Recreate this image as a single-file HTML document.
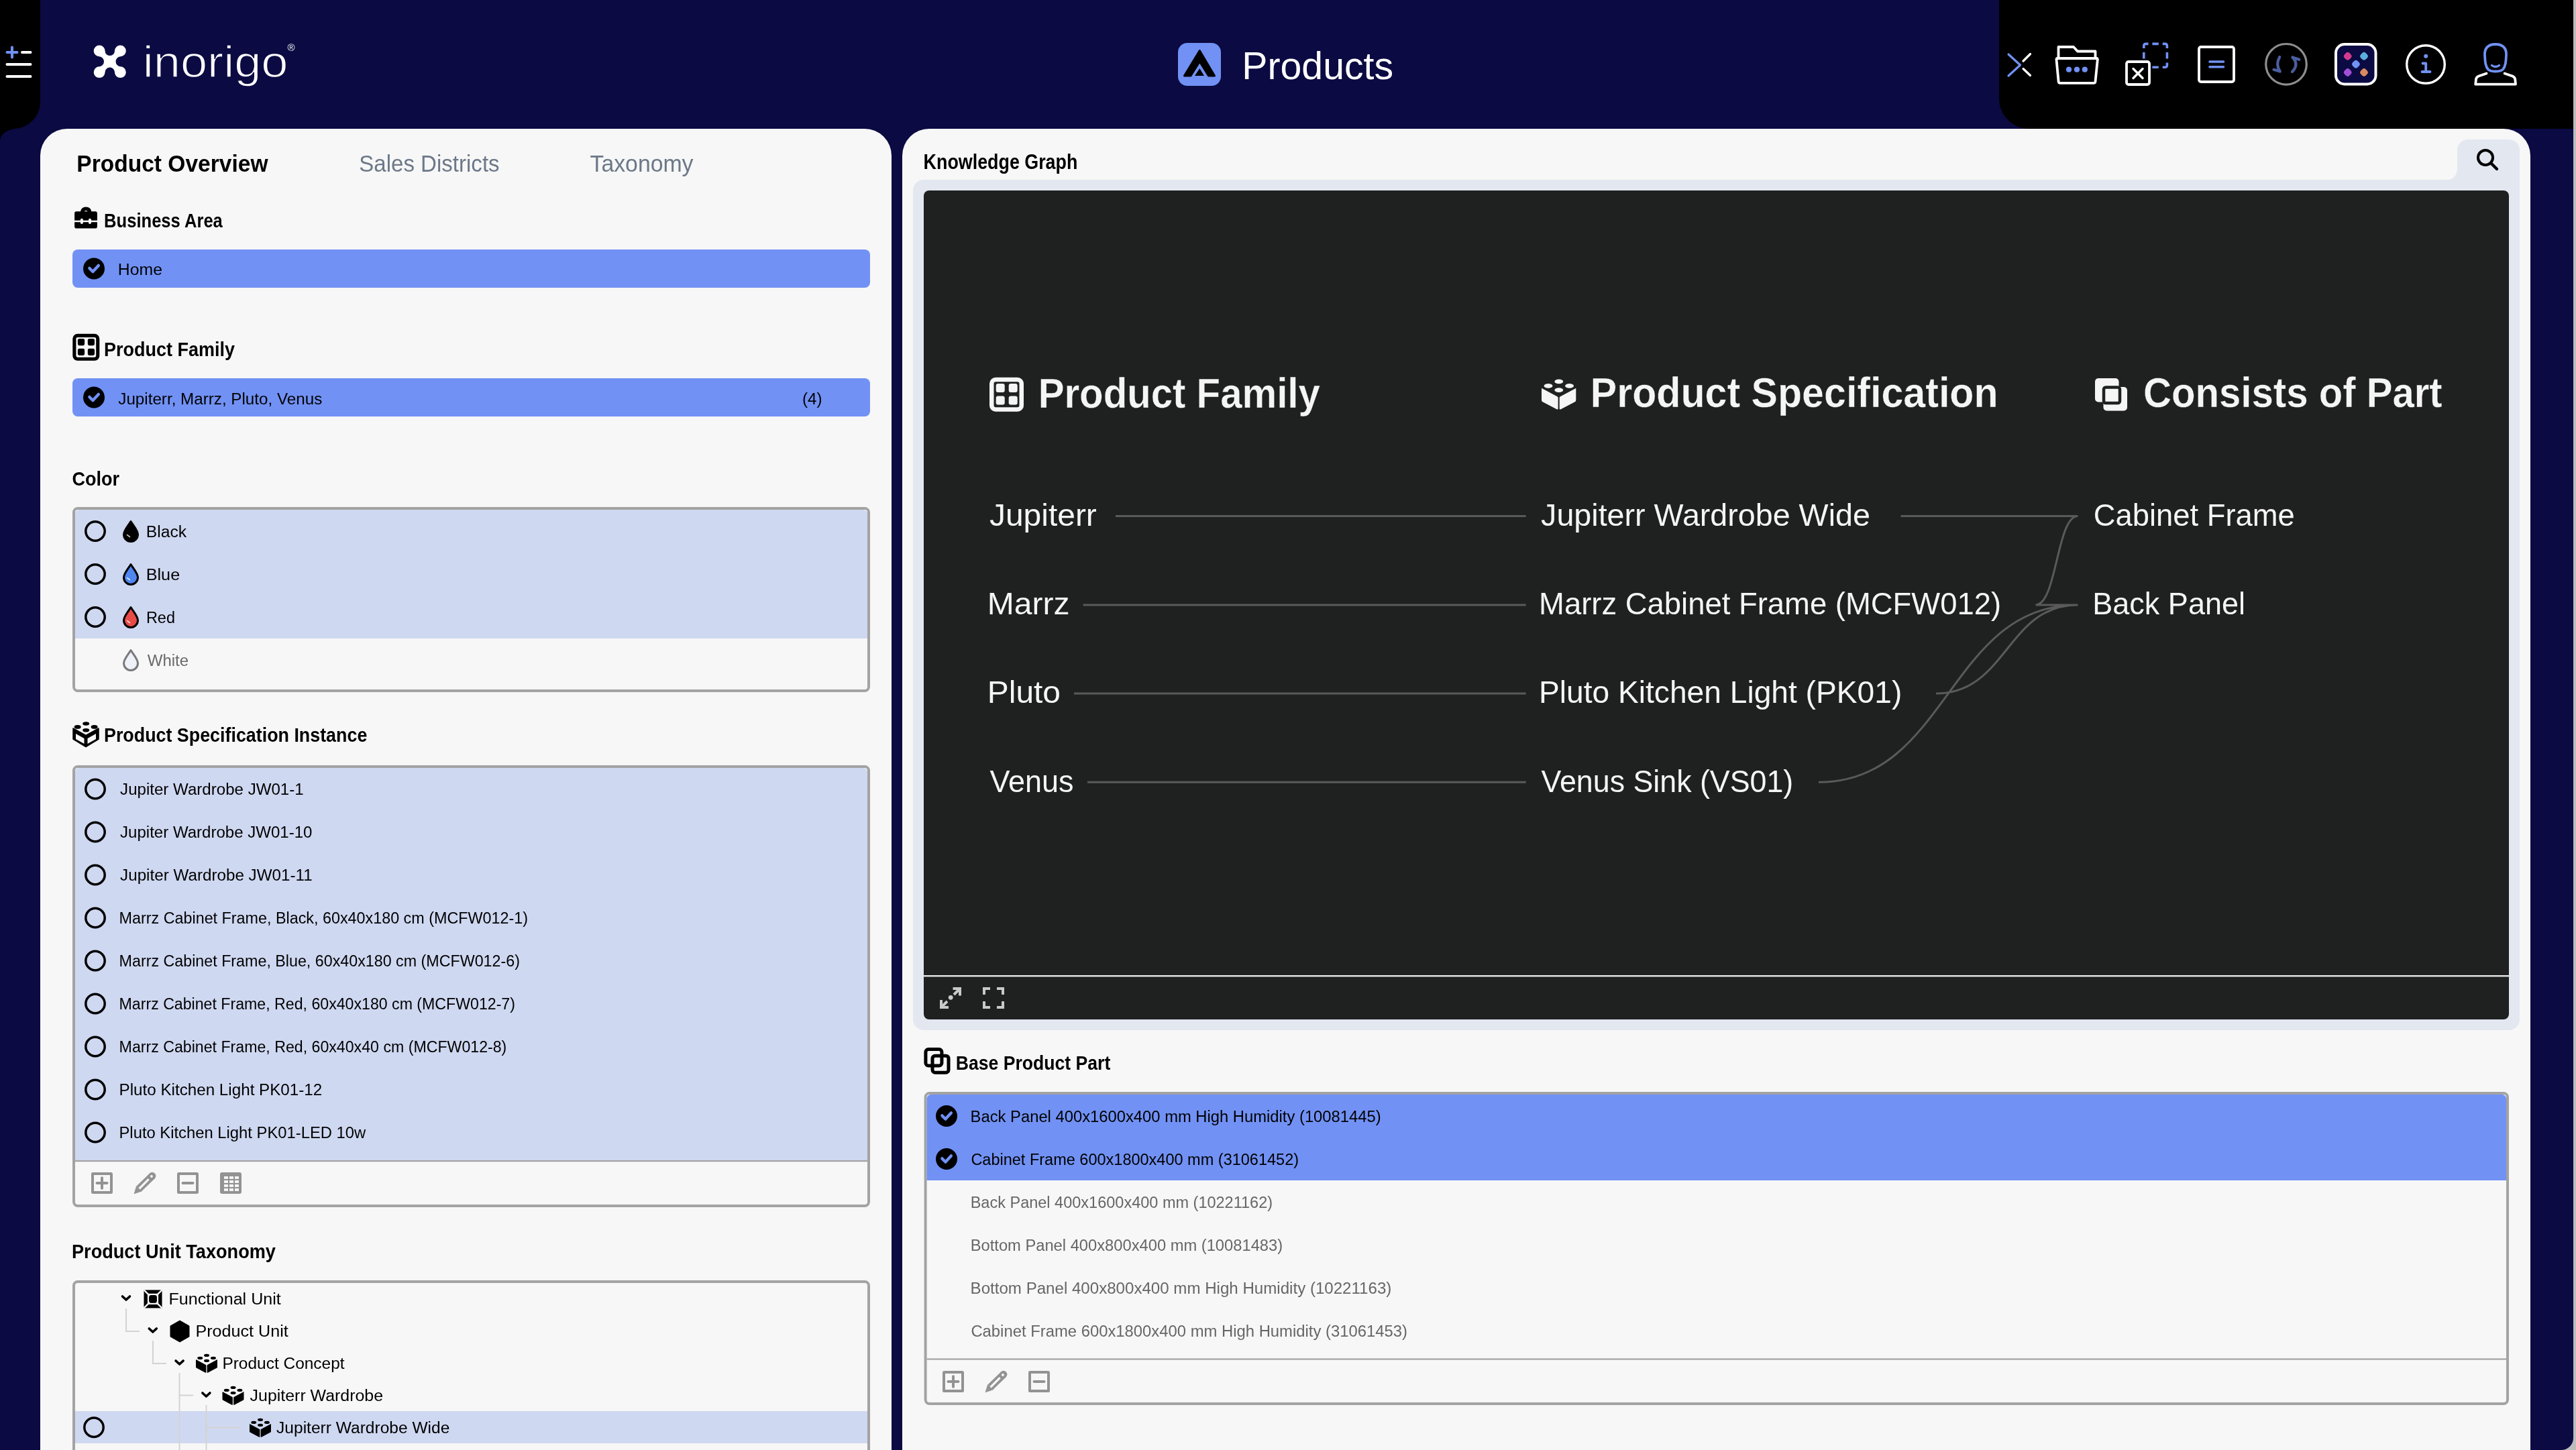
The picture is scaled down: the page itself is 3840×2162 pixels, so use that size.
<!DOCTYPE html>
<html><head><meta charset="utf-8"><title>Products</title>
<style>
html,body{margin:0;padding:0;width:3840px;height:2162px;overflow:hidden;background:#0b0a42;}
svg{display:block;font-family:"Liberation Sans",sans-serif;will-change:transform;}
</style></head><body>
<svg width="3840" height="2162" viewBox="0 0 3840 2162">
<rect x="0" y="0" width="3840" height="2162" fill="#0b0a42"/>
<rect x="3836" y="0" width="4" height="2162" fill="#bcbcbc"/>
<path d="M3836,2144 V2162 H3818 A18,18 0 0 0 3836,2144 Z" fill="#bcbcbc"/>
<path d="M0,0 H60 V152 A40,40 0 0 1 20,192 H0 Z" fill="#000"/>
<path d="M0,192 H26 A26,18 0 0 0 0,210 Z" fill="#000"/>
<path d="M2980,0 H3836 V192 H3025 A45,45 0 0 1 2980,147 Z" fill="#000"/>
<g stroke-linecap="round" stroke-width="4" fill="none"><path d="M10.5,78 H25.5 M18,70.5 V85.5" stroke="#7191f4"/><path d="M33,78 H45.5 M10.5,96 H45.5 M10.5,114 H45.5" stroke="#fff"/></g>
<mask id="logom"><rect x="140" y="60" width="50" height="60" fill="#fff"/><circle cx="163.75" cy="75.75" r="7.25" fill="#000"/><circle cx="163.75" cy="107.85" r="7.25" fill="#000"/><circle cx="147.5" cy="91.8" r="7.5" fill="#000"/><circle cx="180" cy="91.8" r="7.5" fill="#000"/></mask>
<g fill="#fff"><rect x="148.1" y="75.9" width="31.3" height="31.8" mask="url(#logom)"/><circle cx="148.1" cy="75.9" r="8.4"/><circle cx="179.4" cy="75.9" r="8.4"/><circle cx="148.1" cy="107.7" r="8.4"/><circle cx="179.4" cy="107.7" r="8.4"/></g>
<text x="212.7" y="114.6" font-size="66.0" fill="#fff" textLength="216.87" lengthAdjust="spacingAndGlyphs" stroke="#0b0a42" stroke-width="1.4">inorigo</text>
<text x="428.6" y="75.8" font-size="15.0" fill="#fff">®</text>
<rect x="1756" y="64" width="64" height="64" rx="14" fill="#7191f4"/>
<path d="M1788.3,75.5 L1765.5,113 H1775 L1788.3,91.6 L1801.5,113 H1810.5 Z" fill="#000" stroke="#000" stroke-width="3" stroke-linejoin="round"/>
<path d="M1781,113 L1788.3,102 L1795,113 Z" fill="#000"/>
<text x="1851.3" y="118.0" font-size="58.1" fill="#fff" textLength="225.76" lengthAdjust="spacingAndGlyphs">Products</text>
<g fill="none" stroke-linecap="round" stroke-linejoin="round">
<path d="M2994,81 L3011.5,97 L2994,113" stroke="#7191f4" stroke-width="3.2"/>
<path d="M3016,91 L3026.5,80.5 M3016,102.5 L3026.5,112.5" stroke="#fff" stroke-width="3.2"/>
<path d="M3068.5,86 V70 H3091 L3097,76.5 H3123.5 V86" stroke="#fff" stroke-width="3.8"/>
<path d="M3067,87 H3125.5 Q3127,87 3126.8,89 L3123.5,121.5 Q3123.2,123.8 3121,123.8 H3071 Q3068.8,123.8 3068.6,121.5 L3065.5,89 Q3065.3,87 3067,87 Z" stroke="#fff" stroke-width="3.8"/>
</g>
<g fill="#7191f4"><circle cx="3084" cy="103.7" r="4.1"/><circle cx="3096" cy="103.7" r="4.1"/><circle cx="3107.8" cy="103.7" r="4.1"/></g>
<g fill="none" stroke-linecap="round" stroke-linejoin="round">
<path d="M3195.8,72 V68.4 Q3195.8,65.4 3198.8,65.4 H3202.5 M3223.7,65.4 H3227.4 Q3230.4,65.4 3230.4,68.4 V72 M3230.4,93.6 V97.2 Q3230.4,100.2 3227.4,100.2 H3223.7 M3202.5,100.2 H3198.8 Q3195.8,100.2 3195.8,97.2 V93.6 M3208.4,65.4 H3217.8 M3208.4,100.2 H3217.8 M3195.8,78.1 V87.5 M3230.4,78.1 V87.5" stroke="#7191f4" stroke-width="3.6" stroke-linecap="butt"/>
<rect x="3170" y="92" width="34" height="34" rx="3" fill="#000" stroke="#fff" stroke-width="3.8"/>
<path d="M3180,102.5 L3194,116.5 M3194,102.5 L3180,116.5" stroke="#fff" stroke-width="3.4"/>
<rect x="3278" y="70" width="52" height="52" rx="3" stroke="#fff" stroke-width="3.8"/>
<path d="M3294,92 H3314.5 M3294,99.8 H3314.5" stroke="#7191f4" stroke-width="3.6"/>
<circle cx="3408" cy="95.8" r="30.3" stroke="#8e8e8e" stroke-width="3.2"/>
<path d="M3398.2,85 Q3391.8,96 3398.8,106.5 M3398.8,106.5 L3389.5,103.8" stroke="#4b5e9e" stroke-width="4.2"/>
<path d="M3417.5,85.5 Q3427.5,96 3417,107 M3417.5,85.5 L3427.3,88.8" stroke="#4b5e9e" stroke-width="4.2"/>
<rect x="3482" y="66" width="59.5" height="59.5" rx="13" fill="#0b0a42" stroke="#fff" stroke-width="4"/>
</g>
<rect x="3494.5" y="78.6" width="10.4" height="10.4" rx="4" fill="#d33a8f" transform="rotate(45 3499.7 83.8)"/>
<rect x="3518.8" y="78.6" width="10.4" height="10.4" rx="4" fill="#5bafde" transform="rotate(45 3524 83.8)"/>
<rect x="3506.7000000000003" y="90.5" width="10.4" height="10.4" rx="4" fill="#7191f4" transform="rotate(45 3511.9 95.7)"/>
<rect x="3494.5" y="102.8" width="10.4" height="10.4" rx="4" fill="#a24fd6" transform="rotate(45 3499.7 108)"/>
<rect x="3518.8" y="102.8" width="10.4" height="10.4" rx="4" fill="#d98a5f" transform="rotate(45 3524 108)"/>
<g fill="none" stroke-linecap="round" stroke-linejoin="round">
<circle cx="3616" cy="96" r="28.3" stroke="#fff" stroke-width="3.4"/>
<path d="M3611.5,94.5 H3616.2 V107 M3610.5,107 H3622.5" stroke="#7191f4" stroke-width="3.8"/>
</g>
<circle cx="3616.2" cy="83.8" r="3" fill="#7191f4"/>
<g fill="none" stroke-linecap="round" stroke-linejoin="round">
<path d="M3720,66 C3708,66 3703.5,73 3704,82 C3704.5,92 3705,99 3709,103.5 C3713,107.5 3727,107.5 3731,103.5 C3735,99 3735.5,92 3736,82 C3736.5,73 3732,66 3720,66 Z" stroke="#7191f4" stroke-width="3.8"/>
<path d="M3714.5,97.5 Q3720,101.5 3725.5,97.5" stroke="#7191f4" stroke-width="3.4"/>
<path d="M3706.5,109.5 L3695,113.5 Q3691.5,115 3691,118 L3690.2,125.6 H3750 L3749.2,118 Q3748.7,115 3745.2,113.5 L3733.6,109.5" stroke="#fff" stroke-width="3.8"/>
</g>
<path d="M60,2162 V232 A40,40 0 0 1 100,192 H1289 A40,40 0 0 1 1329,232 V2162 Z" fill="#f7f7f7"/>
<path d="M1345,2162 V232 A40,40 0 0 1 1385,192 H3732 A40,40 0 0 1 3772,232 V2162 Z" fill="#f7f7f7"/>
<text x="114.3" y="256.0" font-size="34.9" font-weight="bold" fill="#000" textLength="285.18" lengthAdjust="spacingAndGlyphs">Product Overview</text>
<text x="535.3" y="256.0" font-size="35.6" fill="#6c7888" textLength="209.29" lengthAdjust="spacingAndGlyphs">Sales Districts</text>
<text x="879.5" y="256.0" font-size="35.6" fill="#6c7888" textLength="154.01" lengthAdjust="spacingAndGlyphs">Taxonomy</text>
<path d="M122.6,317 C122.2,309.3 134.1,309.3 133.7,317" fill="none" stroke="#000" stroke-width="5.6"/>
<rect x="111.1" y="315.3" width="33.8" height="25.2" rx="2.8" fill="#000"/>
<rect x="111" y="328.7" width="34.2" height="2.5" fill="#f7f7f7"/>
<rect x="119.9" y="325.7" width="4" height="8.2" rx="2" fill="#f7f7f7"/>
<rect x="132" y="325.7" width="4" height="8.2" rx="2" fill="#f7f7f7"/>
<text x="155.1" y="338.9" font-size="29.1" font-weight="bold" fill="#000" textLength="176.74" lengthAdjust="spacingAndGlyphs">Business Area</text>
<rect x="108" y="372" width="1189" height="57" rx="8" fill="#7191f4"/>
<circle cx="140" cy="400.5" r="16" fill="#000"/>
<path d="M133.4,399.9 L138.4,405.1 L146.8,395.9" fill="none" stroke="#7191f4" stroke-width="4.4" stroke-linecap="round" stroke-linejoin="round"/>
<text x="175.8" y="410.2" font-size="24.7" fill="#000" textLength="66.14" lengthAdjust="spacingAndGlyphs">Home</text>
<rect x="110.85" y="500.35" width="34.90" height="34.90" rx="4.71" fill="none" stroke="#000" stroke-width="5.10"/>
<rect x="115.91" y="505.02" width="10.20" height="10.20" rx="2.35" fill="#000"/>
<rect x="115.91" y="519.68" width="10.20" height="10.20" rx="2.35" fill="#000"/>
<rect x="130.81" y="505.02" width="10.20" height="10.20" rx="2.35" fill="#000"/>
<rect x="130.81" y="519.68" width="10.20" height="10.20" rx="2.35" fill="#000"/>
<text x="155.0" y="530.8" font-size="29.1" font-weight="bold" fill="#000" textLength="194.95" lengthAdjust="spacingAndGlyphs">Product Family</text>
<rect x="108" y="564" width="1189" height="57" rx="8" fill="#7191f4"/>
<circle cx="140" cy="592.5" r="16" fill="#000"/>
<path d="M133.4,591.9 L138.4,597.1 L146.8,587.9" fill="none" stroke="#7191f4" stroke-width="4.4" stroke-linecap="round" stroke-linejoin="round"/>
<text x="176.3" y="602.6" font-size="24.7" fill="#000" textLength="303.94" lengthAdjust="spacingAndGlyphs">Jupiterr, Marrz, Pluto, Venus</text>
<text x="1196.0" y="602.6" font-size="24.7" fill="#000" textLength="29.49" lengthAdjust="spacingAndGlyphs">(4)</text>
<text x="107.4" y="723.5" font-size="29.1" font-weight="bold" fill="#000" textLength="70.52" lengthAdjust="spacingAndGlyphs">Color</text>
<rect x="110" y="758" width="1185" height="272" rx="6" fill="#f7f7f7" stroke="#a3a3a3" stroke-width="4"/>
<path d="M112,766 A6,6 0 0 1 118,760 H1287 A6,6 0 0 1 1293,766 V952 H112 Z" fill="#cfd8f1"/>
<circle cx="142" cy="792" r="14.2" fill="none" stroke="#000" stroke-width="3.5"/>
<path d="M195,777.5 C199,784 205.5,791 205.5,797 A10.5,10.5 0 0 1 184.5,797 C184.5,791 191,784 195,777.5 Z" fill="#000" stroke="#000" stroke-width="3" stroke-linejoin="round"/>
<path d="M189.5,797.5 L193.5,800.5" stroke="#fff" stroke-opacity="0.75" stroke-width="1.6" stroke-linecap="round"/>
<text x="217.8" y="801.0" font-size="24.7" fill="#000" textLength="60.39" lengthAdjust="spacingAndGlyphs">Black</text>
<circle cx="142" cy="856" r="14.2" fill="none" stroke="#000" stroke-width="3.5"/>
<path d="M195,841.5 C199,848 205.5,855 205.5,861 A10.5,10.5 0 0 1 184.5,861 C184.5,855 191,848 195,841.5 Z" fill="#4f86f0" stroke="#000" stroke-width="3" stroke-linejoin="round"/>
<path d="M189.5,861.5 L193.5,864.5" stroke="#fff" stroke-opacity="0.75" stroke-width="1.6" stroke-linecap="round"/>
<text x="217.7" y="865.0" font-size="24.7" fill="#000" textLength="50.49" lengthAdjust="spacingAndGlyphs">Blue</text>
<circle cx="142" cy="920" r="14.2" fill="none" stroke="#000" stroke-width="3.5"/>
<path d="M195,905.5 C199,912 205.5,919 205.5,925 A10.5,10.5 0 0 1 184.5,925 C184.5,919 191,912 195,905.5 Z" fill="#e84b47" stroke="#000" stroke-width="3" stroke-linejoin="round"/>
<path d="M189.5,925.5 L193.5,928.5" stroke="#fff" stroke-opacity="0.75" stroke-width="1.6" stroke-linecap="round"/>
<text x="217.9" y="929.0" font-size="24.7" fill="#000" textLength="43.04" lengthAdjust="spacingAndGlyphs">Red</text>
<path d="M195,969.5 C199,976 205.5,983 205.5,989 A10.5,10.5 0 0 1 184.5,989 C184.5,983 191,976 195,969.5 Z" fill="#eef1f8" stroke="#7a7a7a" stroke-width="3" stroke-linejoin="round"/>
<text x="219.7" y="993.0" font-size="24.7" fill="#6a6a6a" textLength="61.47" lengthAdjust="spacingAndGlyphs">White</text>
<path d="M109.00,1086.00 L128.00,1096.50 L147.00,1086.00 L147.00,1102.00 L128.00,1113.50 L109.00,1102.00 Z" fill="#000" stroke="#000" stroke-width="1.50" stroke-linejoin="round"/>
<path d="M113.00,1094.00 L125.50,1101.00 L125.50,1109.00 L113.00,1102.00 Z M130.50,1101.00 L143.00,1094.00 L143.00,1102.00 L130.50,1109.00 Z" fill="#f7f7f7"/>
<ellipse cx="115.70" cy="1083.90" rx="5.00" ry="2.80" fill="#000"/>
<ellipse cx="140.60" cy="1083.90" rx="5.00" ry="2.80" fill="#000"/>
<ellipse cx="128.20" cy="1079.00" rx="5.00" ry="2.80" fill="#000"/>
<ellipse cx="128.20" cy="1088.80" rx="5.00" ry="2.80" fill="#000"/>
<text x="155.0" y="1105.7" font-size="29.1" font-weight="bold" fill="#000" textLength="392.31" lengthAdjust="spacingAndGlyphs">Product Specification Instance</text>
<rect x="110" y="1143" width="1185" height="655" rx="6" fill="#f7f7f7" stroke="#a3a3a3" stroke-width="4"/>
<path d="M112,1151 A6,6 0 0 1 118,1145 H1287 A6,6 0 0 1 1293,1151 V1730 H112 Z" fill="#cfd8f1"/>
<rect x="112" y="1730" width="1181" height="2.2" fill="#a3a3a3"/>
<circle cx="142" cy="1176.5" r="14.2" fill="none" stroke="#000" stroke-width="3.5"/>
<text x="179.1" y="1184.7" font-size="24.7" fill="#000" textLength="273.55" lengthAdjust="spacingAndGlyphs">Jupiter Wardrobe JW01-1</text>
<circle cx="142" cy="1240.5" r="14.2" fill="none" stroke="#000" stroke-width="3.5"/>
<text x="179.1" y="1248.7" font-size="24.7" fill="#000" textLength="286.31" lengthAdjust="spacingAndGlyphs">Jupiter Wardrobe JW01-10</text>
<circle cx="142" cy="1304.5" r="14.2" fill="none" stroke="#000" stroke-width="3.5"/>
<text x="179.1" y="1312.7" font-size="24.7" fill="#000" textLength="286.55" lengthAdjust="spacingAndGlyphs">Jupiter Wardrobe JW01-11</text>
<circle cx="142" cy="1368.5" r="14.2" fill="none" stroke="#000" stroke-width="3.5"/>
<text x="177.6" y="1376.7" font-size="24.7" fill="#000" textLength="609.36" lengthAdjust="spacingAndGlyphs">Marrz Cabinet Frame, Black, 60x40x180 cm (MCFW012-1)</text>
<circle cx="142" cy="1432.5" r="14.2" fill="none" stroke="#000" stroke-width="3.5"/>
<text x="177.6" y="1440.7" font-size="24.7" fill="#000" textLength="597.35" lengthAdjust="spacingAndGlyphs">Marrz Cabinet Frame, Blue, 60x40x180 cm (MCFW012-6)</text>
<circle cx="142" cy="1496.5" r="14.2" fill="none" stroke="#000" stroke-width="3.5"/>
<text x="177.6" y="1504.7" font-size="24.7" fill="#000" textLength="590.33" lengthAdjust="spacingAndGlyphs">Marrz Cabinet Frame, Red, 60x40x180 cm (MCFW012-7)</text>
<circle cx="142" cy="1560.5" r="14.2" fill="none" stroke="#000" stroke-width="3.5"/>
<text x="177.6" y="1568.7" font-size="24.7" fill="#000" textLength="577.74" lengthAdjust="spacingAndGlyphs">Marrz Cabinet Frame, Red, 60x40x40 cm (MCFW012-8)</text>
<circle cx="142" cy="1624.5" r="14.2" fill="none" stroke="#000" stroke-width="3.5"/>
<text x="177.5" y="1632.7" font-size="24.7" fill="#000" textLength="302.80" lengthAdjust="spacingAndGlyphs">Pluto Kitchen Light PK01-12</text>
<circle cx="142" cy="1688.5" r="14.2" fill="none" stroke="#000" stroke-width="3.5"/>
<text x="177.5" y="1696.7" font-size="24.7" fill="#000" textLength="367.69" lengthAdjust="spacingAndGlyphs">Pluto Kitchen Light PK01-LED 10w</text>
<rect x="138" y="1750" width="28" height="28" rx="0.6" fill="none" stroke="#939393" stroke-width="4"/>
<path d="M144.5,1764 H159.5 M152,1756.3 V1771.7" stroke="#939393" stroke-width="4" stroke-linecap="round"/>
<path d="M207.55,1772.15 L226.9,1753.3" stroke="#939393" stroke-width="10.9"/>
<circle cx="226.9" cy="1753.3" r="5.45" fill="#939393"/>
<path d="M200.1,1779.8 L203.6,1768.4 L211.5,1775.9 Z" fill="#939393" stroke="#939393" stroke-width="0.8" stroke-linejoin="round"/>
<path d="M207.6,1772.4 L221.7,1758.2" stroke="#f7f7f7" stroke-width="3.2"/>
<circle cx="225.9" cy="1754.1" r="2" fill="#f7f7f7"/>
<rect x="266" y="1750" width="28" height="28" rx="0.6" fill="none" stroke="#939393" stroke-width="4"/>
<path d="M272.5,1764 H287.5" stroke="#939393" stroke-width="4" stroke-linecap="round"/>
<rect x="328" y="1748" width="32" height="32" rx="3" fill="#939393"/>
<rect x="334.0" y="1754.0" width="6" height="3.9" fill="#f7f7f7"/>
<rect x="342.0" y="1754.0" width="6" height="3.9" fill="#f7f7f7"/>
<rect x="350.0" y="1754.0" width="6" height="3.9" fill="#f7f7f7"/>
<rect x="334.0" y="1760.0" width="6" height="3.9" fill="#f7f7f7"/>
<rect x="342.0" y="1760.0" width="6" height="3.9" fill="#f7f7f7"/>
<rect x="350.0" y="1760.0" width="6" height="3.9" fill="#f7f7f7"/>
<rect x="334.0" y="1766.0" width="6" height="3.9" fill="#f7f7f7"/>
<rect x="342.0" y="1766.0" width="6" height="3.9" fill="#f7f7f7"/>
<rect x="350.0" y="1766.0" width="6" height="3.9" fill="#f7f7f7"/>
<rect x="334.0" y="1772.0" width="6" height="3.9" fill="#f7f7f7"/>
<rect x="342.0" y="1772.0" width="6" height="3.9" fill="#f7f7f7"/>
<rect x="350.0" y="1772.0" width="6" height="3.9" fill="#f7f7f7"/>
<text x="107.0" y="1875.5" font-size="29.1" font-weight="bold" fill="#000" textLength="303.95" lengthAdjust="spacingAndGlyphs">Product Unit Taxonomy</text>
<rect x="110" y="1911" width="1185" height="400" rx="6" fill="#f7f7f7" stroke="#a3a3a3" stroke-width="4"/>
<rect x="112" y="2104" width="1181" height="48" fill="#cfd8f1"/>
<path d="M188,1951 V1985 H208 M228,1999 V2033 H248 M267.5,2047 V2162 M267.5,2080.5 H288 M307.5,2095 V2162 M307.5,2128.5 H360" fill="none" stroke="#d3d3d3" stroke-width="2"/>
<path d="M182.5,1933.0 L188.0,1938.0 L193.5,1933.0" fill="none" stroke="#000" stroke-width="3.6" stroke-linecap="round" stroke-linejoin="round"/>
<path d="M222.3,1981.0 L227.8,1986.0 L233.3,1981.0" fill="none" stroke="#000" stroke-width="3.6" stroke-linecap="round" stroke-linejoin="round"/>
<path d="M262.1,2029.0 L267.6,2034.0 L273.1,2029.0" fill="none" stroke="#000" stroke-width="3.6" stroke-linecap="round" stroke-linejoin="round"/>
<path d="M301.9,2077.0 L307.4,2082.0 L312.9,2077.0" fill="none" stroke="#000" stroke-width="3.6" stroke-linecap="round" stroke-linejoin="round"/>
<rect x="214.5" y="1923.4" width="27" height="27" fill="#000"/>
<path d="M217.5,1926.4 L222.5,1931.4 M238.5,1926.4 L233.5,1931.4 M217.5,1947.4 L222.5,1942.4 M238.5,1947.4 L233.5,1942.4" stroke="#f7f7f7" stroke-width="2"/>
<rect x="221.0" y="1929.9" width="14" height="14" fill="none" stroke="#f7f7f7" stroke-width="2.2"/>
<path d="M214.5,1923.4 L241.5,1950.4 M241.5,1923.4 L214.5,1950.4" stroke="#f7f7f7" stroke-width="2.2"/>
<rect x="222.7" y="1931.6000000000001" width="10.6" height="10.6" fill="#000"/>
<path d="M268,1969 L282,1977 L282,1993 L268,2001 L254,1993 L254,1977 Z" fill="#000" stroke="#000" stroke-width="1" stroke-linejoin="round"/>
<path d="M292.00,2027.12 L306.88,2035.04 Q307.36,2035.36 307.36,2036.00 L307.36,2046.00 Q307.36,2047.28 306.16,2046.64 L293.04,2039.84 Q292.00,2039.28 292.00,2038.24 Z" fill="#000"/>
<path d="M324.00,2027.12 L309.12,2035.04 Q308.64,2035.36 308.64,2036.00 L308.64,2046.00 Q308.64,2047.28 309.84,2046.64 L322.96,2039.84 Q324.00,2039.28 324.00,2038.24 Z" fill="#000"/>
<ellipse cx="298.24" cy="2024.96" rx="4.00" ry="2.12" fill="#000"/>
<ellipse cx="317.92" cy="2024.96" rx="4.00" ry="2.12" fill="#000"/>
<ellipse cx="308.08" cy="2020.96" rx="4.00" ry="2.12" fill="#000"/>
<ellipse cx="308.08" cy="2028.88" rx="4.00" ry="2.12" fill="#000"/>
<path d="M331.50,2075.12 L346.38,2083.04 Q346.86,2083.36 346.86,2084.00 L346.86,2094.00 Q346.86,2095.28 345.66,2094.64 L332.54,2087.84 Q331.50,2087.28 331.50,2086.24 Z" fill="#000"/>
<path d="M363.50,2075.12 L348.62,2083.04 Q348.14,2083.36 348.14,2084.00 L348.14,2094.00 Q348.14,2095.28 349.34,2094.64 L362.46,2087.84 Q363.50,2087.28 363.50,2086.24 Z" fill="#000"/>
<ellipse cx="337.74" cy="2072.96" rx="4.00" ry="2.12" fill="#000"/>
<ellipse cx="357.42" cy="2072.96" rx="4.00" ry="2.12" fill="#000"/>
<ellipse cx="347.58" cy="2068.96" rx="4.00" ry="2.12" fill="#000"/>
<ellipse cx="347.58" cy="2076.88" rx="4.00" ry="2.12" fill="#000"/>
<path d="M372.00,2123.12 L386.88,2131.04 Q387.36,2131.36 387.36,2132.00 L387.36,2142.00 Q387.36,2143.28 386.16,2142.64 L373.04,2135.84 Q372.00,2135.28 372.00,2134.24 Z" fill="#000"/>
<path d="M404.00,2123.12 L389.12,2131.04 Q388.64,2131.36 388.64,2132.00 L388.64,2142.00 Q388.64,2143.28 389.84,2142.64 L402.96,2135.84 Q404.00,2135.28 404.00,2134.24 Z" fill="#000"/>
<ellipse cx="378.24" cy="2120.96" rx="4.00" ry="2.12" fill="#000"/>
<ellipse cx="397.92" cy="2120.96" rx="4.00" ry="2.12" fill="#000"/>
<ellipse cx="388.08" cy="2116.96" rx="4.00" ry="2.12" fill="#000"/>
<ellipse cx="388.08" cy="2124.88" rx="4.00" ry="2.12" fill="#000"/>
<text x="251.5" y="1945.1" font-size="24.7" fill="#000" textLength="167.24" lengthAdjust="spacingAndGlyphs">Functional Unit</text>
<text x="291.5" y="1993.1" font-size="24.7" fill="#000" textLength="138.24" lengthAdjust="spacingAndGlyphs">Product Unit</text>
<text x="331.4" y="2041.1" font-size="24.7" fill="#000" textLength="182.19" lengthAdjust="spacingAndGlyphs">Product Concept</text>
<text x="372.6" y="2089.1" font-size="24.7" fill="#000" textLength="198.49" lengthAdjust="spacingAndGlyphs">Jupiterr Wardrobe</text>
<text x="412.1" y="2137.1" font-size="24.7" fill="#000" textLength="258.27" lengthAdjust="spacingAndGlyphs">Jupiterr Wardrobe Wide</text>
<circle cx="140" cy="2128.3" r="14.2" fill="none" stroke="#000" stroke-width="3.5"/>
<text x="1376.6" y="251.7" font-size="30.5" font-weight="bold" fill="#000" textLength="229.76" lengthAdjust="spacingAndGlyphs">Knowledge Graph</text>
<rect x="1361" y="268" width="2395" height="1268" rx="16" fill="#e3e7f0"/>
<rect x="3663" y="208" width="93" height="100" rx="16" fill="#e3e7f0"/>
<path d="M3663,252 V268.5 H3647 A16,16 0 0 0 3663,252 Z" fill="#e3e7f0"/>
<circle cx="3705" cy="235" r="11" fill="none" stroke="#000" stroke-width="4"/>
<path d="M3713.5,243.5 L3722,252" stroke="#000" stroke-width="4.4" stroke-linecap="round"/>
<rect x="1377" y="284" width="2363" height="1236" rx="8" fill="#1f2020"/>
<rect x="1377" y="1454" width="2363" height="2.4" fill="#e6e6e6"/>
<g fill="none" stroke="#c9c9c9" stroke-width="4">
<path d="M1420.5,1474 H1431 V1484.5 M1414,1502 H1403 V1491"/>
<path d="M1431,1474 L1422,1483 M1403,1502 L1412,1493"/>
<path d="M1467,1483 V1474 H1476 M1486,1474 H1495 V1483 M1467,1493 V1502 H1476 M1486,1502 H1495 V1493"/>
</g>
<circle cx="1417.2" cy="1487.3" r="3.4" fill="#c9c9c9"/>
<rect x="1478.25" y="565.95" width="44.50" height="44.50" rx="6.00" fill="none" stroke="#f5f5f5" stroke-width="6.50"/>
<rect x="1484.70" y="571.90" width="13.00" height="13.00" rx="3.00" fill="#f5f5f5"/>
<rect x="1484.70" y="590.60" width="13.00" height="13.00" rx="3.00" fill="#f5f5f5"/>
<rect x="1503.70" y="571.90" width="13.00" height="13.00" rx="3.00" fill="#f5f5f5"/>
<rect x="1503.70" y="590.60" width="13.00" height="13.00" rx="3.00" fill="#f5f5f5"/>
<text x="1547.7" y="607.5" font-size="63.4" font-weight="bold" fill="#f5f5f5" textLength="420.20" lengthAdjust="spacingAndGlyphs" stroke="#1f2020" stroke-width="0.4">Product Family</text>
<path d="M2298.00,578.84 L2321.85,591.53 Q2322.62,592.05 2322.62,593.07 L2322.62,609.11 Q2322.62,611.16 2320.70,610.13 L2299.67,599.23 Q2298.00,598.33 2298.00,596.66 Z" fill="#f5f5f5"/>
<path d="M2349.30,578.84 L2325.45,591.53 Q2324.68,592.05 2324.68,593.07 L2324.68,609.11 Q2324.68,611.16 2326.60,610.13 L2347.63,599.23 Q2349.30,598.33 2349.30,596.66 Z" fill="#f5f5f5"/>
<ellipse cx="2308.00" cy="575.38" rx="6.41" ry="3.40" fill="#f5f5f5"/>
<ellipse cx="2339.55" cy="575.38" rx="6.41" ry="3.40" fill="#f5f5f5"/>
<ellipse cx="2323.78" cy="568.96" rx="6.41" ry="3.40" fill="#f5f5f5"/>
<ellipse cx="2323.78" cy="581.66" rx="6.41" ry="3.40" fill="#f5f5f5"/>
<text x="2370.7" y="607.3" font-size="63.4" font-weight="bold" fill="#f5f5f5" textLength="607.92" lengthAdjust="spacingAndGlyphs" stroke="#1f2020" stroke-width="0.4">Product Specification</text>
<rect x="3123" y="564" width="35.5" height="35.5" rx="5" fill="#f5f5f5"/>
<rect x="3135.5" y="577" width="35.5" height="35.5" rx="5" fill="#f5f5f5" stroke="#1f2020" stroke-width="0"/>
<rect x="3136" y="577.5" width="24" height="23.5" rx="3" fill="none" stroke="#1f2020" stroke-width="4.5"/>
<text x="3195.1" y="607.3" font-size="63.4" font-weight="bold" fill="#f5f5f5" textLength="445.59" lengthAdjust="spacingAndGlyphs" stroke="#1f2020" stroke-width="0.4">Consists of Part</text>
<text x="1475.0" y="783.8" font-size="46.5" fill="#f5f5f5" textLength="159.84" lengthAdjust="spacingAndGlyphs">Jupiterr</text>
<text x="1471.8" y="916.1" font-size="46.5" fill="#f5f5f5" textLength="122.63" lengthAdjust="spacingAndGlyphs">Marrz</text>
<text x="1471.8" y="1048.2" font-size="46.5" fill="#f5f5f5" textLength="109.24" lengthAdjust="spacingAndGlyphs">Pluto</text>
<text x="1475.5" y="1180.5" font-size="46.5" fill="#f5f5f5" textLength="125.09" lengthAdjust="spacingAndGlyphs">Venus</text>
<text x="2297.1" y="783.8" font-size="46.5" fill="#f5f5f5" textLength="490.79" lengthAdjust="spacingAndGlyphs">Jupiterr Wardrobe Wide</text>
<text x="2294.1" y="916.1" font-size="46.5" fill="#f5f5f5" textLength="689.04" lengthAdjust="spacingAndGlyphs">Marrz Cabinet Frame (MCFW012)</text>
<text x="2294.0" y="1048.2" font-size="46.5" fill="#f5f5f5" textLength="541.25" lengthAdjust="spacingAndGlyphs">Pluto Kitchen Light (PK01)</text>
<text x="2297.6" y="1180.5" font-size="46.5" fill="#f5f5f5" textLength="375.65" lengthAdjust="spacingAndGlyphs">Venus Sink (VS01)</text>
<text x="3120.7" y="783.8" font-size="46.5" fill="#f5f5f5" textLength="300.12" lengthAdjust="spacingAndGlyphs">Cabinet Frame</text>
<text x="3119.3" y="916.1" font-size="46.5" fill="#f5f5f5" textLength="227.70" lengthAdjust="spacingAndGlyphs">Back Panel</text>
<path d="M1663,769.6 H2274.6 M1614.6,901.9 H2274.6 M1601,1034 H2274.6 M1621,1166.3 H2274.6 M2833.6,769.6 H3097.4 M3034.5,901.9 C3065.95,901.9 3065.95,769.6 3097.4,769.6 M3034.5,901.9 H3097.4 M2886,1034 C2991.7,1034 2991.7,901.9 3097.4,901.9 M2711,1166.3 C2904.2,1166.3 2904.2,901.9 3097.4,901.9" fill="none" stroke="#5a5a5a" stroke-width="3"/>
<rect x="1379.9" y="1564.5" width="24" height="24.5" rx="4" fill="none" stroke="#000" stroke-width="5"/>
<rect x="1390" y="1574.2" width="24" height="25" rx="4" fill="none" stroke="#000" stroke-width="5"/>
<text x="1424.7" y="1594.6" font-size="29.1" font-weight="bold" fill="#000" textLength="230.60" lengthAdjust="spacingAndGlyphs">Base Product Part</text>
<rect x="1379.6" y="1630" width="2358.4" height="463" rx="6" fill="#f7f7f7" stroke="#a3a3a3" stroke-width="4"/>
<path d="M1381.6,1638 A6,6 0 0 1 1387.6,1632 H3730 A6,6 0 0 1 3736,1638 V1760 H1381.6 Z" fill="#7191f4"/>
<circle cx="1411" cy="1664" r="16" fill="#000"/>
<path d="M1404.4,1663.4 L1409.4,1668.6 L1417.8,1659.4" fill="none" stroke="#7191f4" stroke-width="4.4" stroke-linecap="round" stroke-linejoin="round"/>
<circle cx="1411" cy="1728" r="16" fill="#000"/>
<path d="M1404.4,1727.4 L1409.4,1732.6 L1417.8,1723.4" fill="none" stroke="#7191f4" stroke-width="4.4" stroke-linecap="round" stroke-linejoin="round"/>
<text x="1446.6" y="1673.3" font-size="24.7" fill="#000" textLength="612.03" lengthAdjust="spacingAndGlyphs">Back Panel 400x1600x400 mm High Humidity (10081445)</text>
<text x="1447.4" y="1737.3" font-size="24.7" fill="#000" textLength="488.65" lengthAdjust="spacingAndGlyphs">Cabinet Frame 600x1800x400 mm (31061452)</text>
<text x="1446.7" y="1801.3" font-size="24.7" fill="#666" textLength="450.37" lengthAdjust="spacingAndGlyphs">Back Panel 400x1600x400 mm (10221162)</text>
<text x="1446.7" y="1865.3" font-size="24.7" fill="#666" textLength="465.42" lengthAdjust="spacingAndGlyphs">Bottom Panel 400x800x400 mm (10081483)</text>
<text x="1446.6" y="1929.3" font-size="24.7" fill="#666" textLength="627.76" lengthAdjust="spacingAndGlyphs">Bottom Panel 400x800x400 mm High Humidity (10221163)</text>
<text x="1447.4" y="1993.3" font-size="24.7" fill="#666" textLength="650.49" lengthAdjust="spacingAndGlyphs">Cabinet Frame 600x1800x400 mm High Humidity (31061453)</text>
<rect x="1381.6" y="2025.4" width="2354.4" height="2.2" fill="#a3a3a3"/>
<rect x="1407" y="2046" width="28" height="28" rx="0.6" fill="none" stroke="#939393" stroke-width="4"/>
<path d="M1413.5,2060 H1428.5 M1421,2052.3 V2067.7" stroke="#939393" stroke-width="4" stroke-linecap="round"/>
<path d="M1476.55,2068.15 L1495.9,2049.3" stroke="#939393" stroke-width="10.9"/>
<circle cx="1495.9" cy="2049.3" r="5.45" fill="#939393"/>
<path d="M1469.1,2075.8 L1472.6,2064.4 L1480.5,2071.9 Z" fill="#939393" stroke="#939393" stroke-width="0.8" stroke-linejoin="round"/>
<path d="M1476.6,2068.4 L1490.7,2054.2" stroke="#f7f7f7" stroke-width="3.2"/>
<circle cx="1494.9" cy="2050.1" r="2" fill="#f7f7f7"/>
<rect x="1535" y="2046" width="28" height="28" rx="0.6" fill="none" stroke="#939393" stroke-width="4"/>
<path d="M1541.5,2060 H1556.5" stroke="#939393" stroke-width="4" stroke-linecap="round"/>
</svg>
</body></html>
